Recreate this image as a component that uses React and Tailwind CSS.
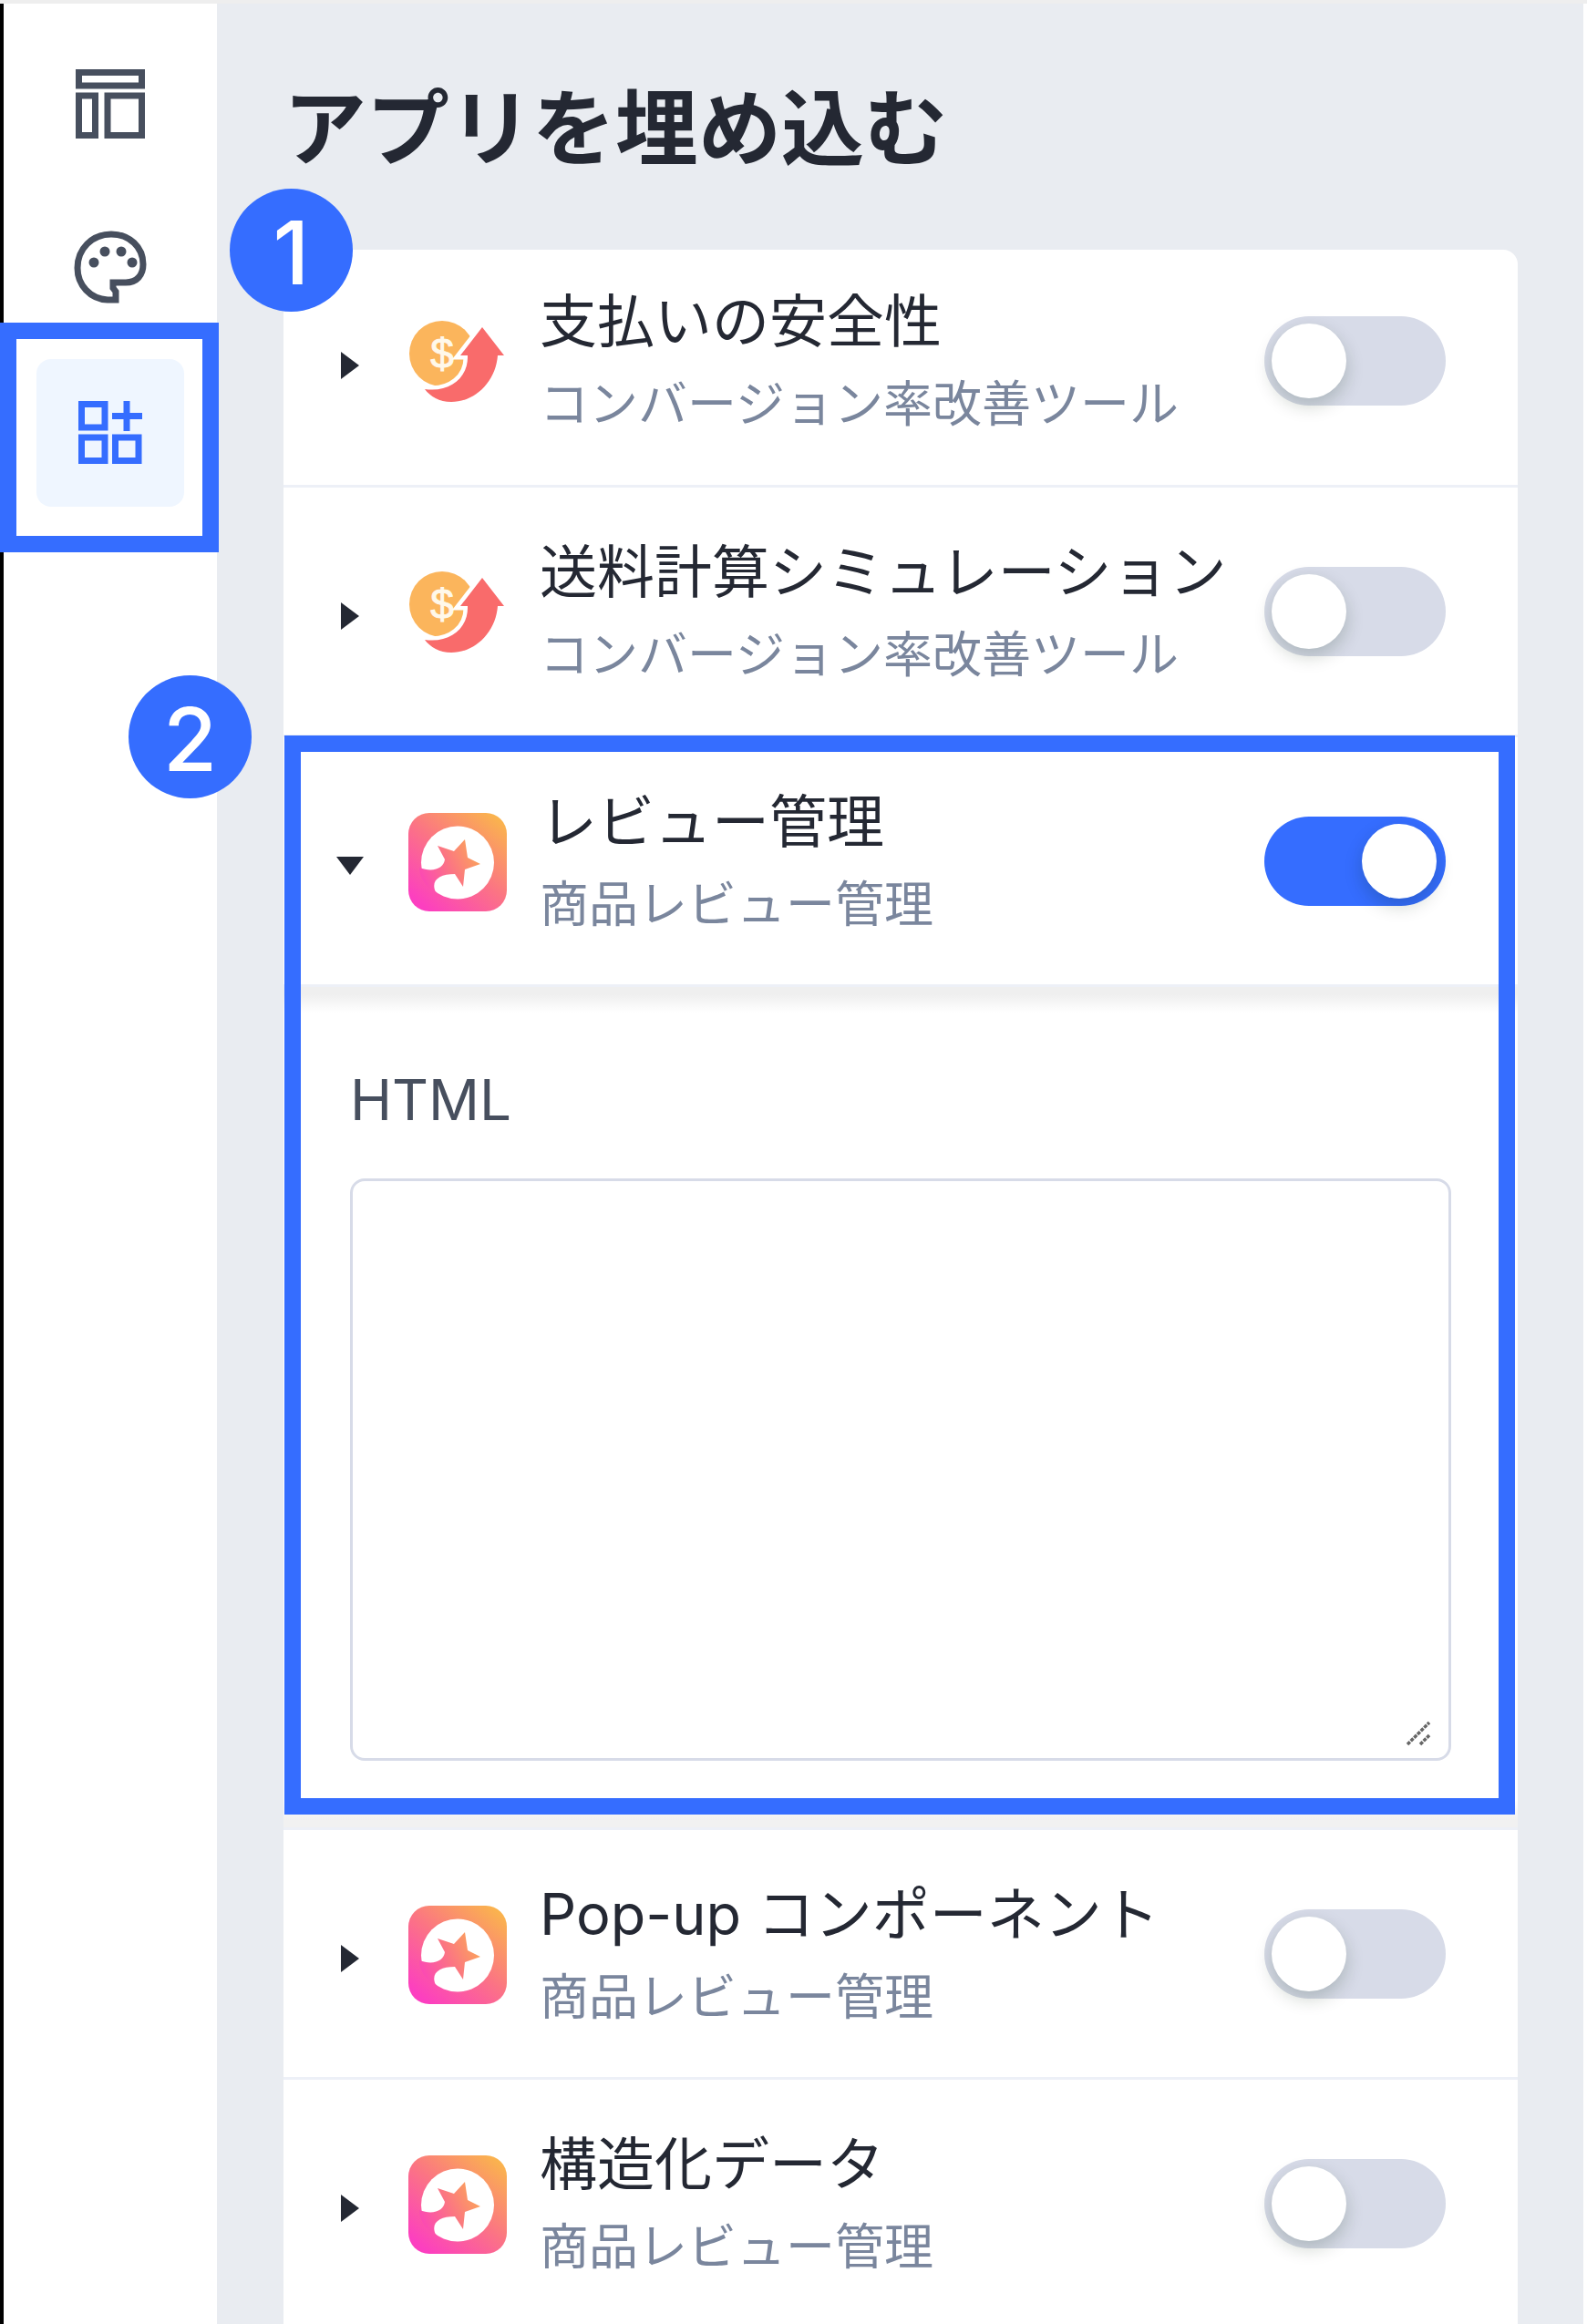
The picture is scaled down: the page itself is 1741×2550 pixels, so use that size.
import React, { useState } from 'react';

const apps = [
    { id: 'payment', name: '支払いの安全性', desc: 'コンバージョン率改善ツール', icon: 'growth' },
    { id: 'shipping', name: '送料計算シミュレーション', desc: 'コンバージョン率改善ツール', icon: 'growth' },
    { id: 'review', name: 'レビュー管理', desc: '商品レビュー管理', icon: 'star', enabled: true, open: true, step: 2 },
    { id: 'popup', name: 'Pop-up コンポーネント', desc: '商品レビュー管理', icon: 'star' },
    { id: 'schema', name: '構造化データ', desc: '商品レビュー管理', icon: 'star' },
];

const LayoutIcon = () => (
    <svg viewBox="0 0 76 76" className="size-[76px]" fill="none" stroke="#474f5e" strokeWidth="7">
        <rect x="3.5" y="3.5" width="69" height="14.5" />
        <rect x="3.5" y="29" width="18" height="43.5" />
        <rect x="35" y="29" width="37.5" height="43.5" />
    </svg>
);

const PaletteIcon = () => (
    <svg viewBox="0 0 80 80" className="size-20" fill="none" stroke="#474f5e" strokeWidth="7">
        <path d="M46 76H37C18 75 4 60 4 41C4 20 20 4 41 4C61 4 76 18 76 37C76 49 69 57 57 57H43V63L46 67Z" />
        <g fill="#474f5e" stroke="none">
            <circle cx="22" cy="35" r="5.5" />
            <circle cx="34" cy="23" r="5.5" />
            <circle cx="52" cy="23" r="5.5" />
            <circle cx="64" cy="35" r="5.5" />
        </g>
    </svg>
);

const AppsIcon = () => (
    <svg viewBox="0 0 70 70" className="size-[70px]" fill="none" stroke="#356dff" strokeWidth="7">
        <rect x="3.5" y="3.5" width="25.5" height="25.5" />
        <rect x="3.5" y="40" width="25.5" height="25.5" />
        <rect x="40.5" y="40" width="25.5" height="25.5" />
        <path d="M53 0V33M37 16.5H70" />
    </svg>
);

const GrowthIcon = () => (
    <svg viewBox="0 0 108 108" className="mt-0.5 size-[108px] shrink-0">
        <circle cx="37" cy="45" r="36" fill="#fbb55c" />
        <text
            x="37"
            y="61"
            textAnchor="middle"
            fontSize="46"
            fill="#fff8ea"
            stroke="#fff8ea"
            className="font-['Liberation_Sans']"
        >
            $
        </text>
        <path
            d="M81 16L105 47H98C96 75 74 98 47 98C34 98 24 92 18 84C46 88 66 71 65 47H57Z"
            fill="#f96b6b"
            stroke="#fff"
            strokeWidth="9"
            paintOrder="stroke"
        />
    </svg>
);

const StarIcon = () => (
    <svg viewBox="0 0 108 108" className="mt-0.5 size-[108px] shrink-0">
        <defs>
            <linearGradient id="starBg" x1="0.15" y1="0.95" x2="0.9" y2="0.05">
                <stop offset="0" stopColor="#fc3fc0" />
                <stop offset="0.5" stopColor="#fb7484" />
                <stop offset="1" stopColor="#fab34e" />
            </linearGradient>
            <linearGradient id="starFg" gradientUnits="userSpaceOnUse" x1="14" y1="72" x2="74" y2="42">
                <stop offset="0" stopColor="#fb49b4" />
                <stop offset="0.5" stopColor="#fb7484" />
                <stop offset="1" stopColor="#fba25c" />
            </linearGradient>
        </defs>
        <rect width="108" height="108" rx="23" fill="url(#starBg)" />
        <circle cx="54" cy="54.5" r="40" fill="#fff" />
        <path d="M12 60C28 66 39 60 40 51L32 36L50 42L62 29L65 49L79 56L62 62L60 81L51 67C34 67 24 74 30 87C20 82 12 72 12 60Z" fill="url(#starFg)" />
    </svg>
);

const Switch = ({ checked, onChange, label }) => (
    <label className="relative block h-[98px] w-[199px] shrink-0 cursor-pointer">
        <input type="checkbox" role="switch" aria-label={label} checked={checked} onChange={onChange} className="peer sr-only" />
        <span className="block h-full rounded-full bg-[#d7dbe8] peer-checked:bg-[#356dff]" />
        <span className="absolute top-2 left-2 size-[82px] rounded-full bg-white shadow-[0_8px_20px_rgba(0,35,11,0.2)] peer-checked:right-2.5 peer-checked:left-auto" />
    </label>
);

const StepBadge = ({ number, className }) => (
    <span className={`absolute z-10 flex size-[135px] items-center justify-center rounded-full bg-[#356dff] pt-1 font-['Inter'] text-8xl font-medium text-white ${className}`}>
        {number}
    </span>
);

const AppItem = ({ app }) => {
    const [enabled, setEnabled] = useState(!!app.enabled);
    const [open, setOpen] = useState(!!app.open);

    return (
        <li className="group relative border-b-3 border-[#edf0f7]">
            <div className="flex h-[271px] items-center pr-[79px] pl-[63px] group-first:h-[258px] group-first:pb-3.5">
                <button onClick={() => setOpen(!open)} aria-label={app.name} aria-expanded={open} className="mt-2.5 mr-[54px] flex size-5 shrink-0 items-center justify-center">
                    <svg viewBox="0 0 32 32" className={`size-8 shrink-0 ${open ? 'rotate-90' : ''}`} fill="#242833">
                        <path d="M6 1L26 16L6 31Z" />
                    </svg>
                </button>
                {app.icon === 'growth' ? <GrowthIcon /> : <StarIcon />}
                <div className="ml-9 flex-1 pt-1.5 whitespace-nowrap">
                    <h2 className="text-[63px] leading-[90px] text-[#242833]">{app.name}</h2>
                    <p className="text-[54px] leading-[94px] text-[#7a869d]">{app.desc}</p>
                </div>
                <Switch checked={enabled} onChange={() => setEnabled(!enabled)} label={app.name} />
            </div>
            {open && (
                <div className="border-t-3 border-[#edf0f7] bg-[linear-gradient(to_bottom,#efefef_8px,#fff_28px,#fff_calc(100%-30px),#f1f1f1_calc(100%-8px))] px-[73px] pt-[84px] pb-[73px]">
                    <label htmlFor={app.id} className="block text-[62px] leading-20 text-[#474f5e]">HTML</label>
                    <div className="relative mt-[46px]">
                        <textarea id={app.id} className="block h-[639px] w-full resize-none rounded-2xl border-3 border-[#d7dbe8] bg-white p-6 text-5xl outline-none" />
                        <svg viewBox="0 0 28 28" className="pointer-events-none absolute right-[22px] bottom-4 size-7" stroke="#666" strokeWidth="3.5" strokeDasharray="4 1.2">
                            <path d="M2 26L26 2M16 26L26 16" />
                        </svg>
                    </div>
                </div>
            )}
            {app.step && (
                <>
                    <div className="pointer-events-none absolute -top-0.5 right-[3px] bottom-3.5 left-px border-18 border-[#356dff]" />
                    <StepBadge number={app.step} className="-top-[68px] -left-[170px]" />
                </>
            )}
        </li>
    );
};

const App = () => (
    <div className="flex h-screen flex-col overflow-hidden border-t-4 border-[#eeeeee] bg-white font-['Inter','Noto_Sans_CJK_JP',sans-serif]">
        <div className="flex min-h-0 flex-1">
            <nav className="flex w-[238px] shrink-0 flex-col items-center border-l-4 border-black bg-white pt-[72px]">
                <button aria-label="Layout"><LayoutIcon /></button>
                <button aria-label="Theme" className="mt-[101px]"><PaletteIcon /></button>
                <div className="relative mt-[61px]">
                    <button aria-label="Apps" className="flex size-[162px] items-center justify-center rounded-2xl bg-[#eff6ff]">
                        <AppsIcon />
                    </button>
                    <div className="pointer-events-none absolute -top-10 -right-[38px] -bottom-[50px] -left-10 border-18 border-[#356dff]" />
                </div>
            </nav>
            <main className="min-w-0 flex-1 border-r-4 border-white bg-[#e9ecf1] pt-[82px] pr-[72px] pl-[73px]">
                <h1 className="text-[91px] leading-[110px] font-bold text-[#242833]">アプリを埋め込む</h1>
                <div className="relative mt-[78px]">
                    <StepBadge number={1} className="-top-[67px] -left-[59px]" />
                    <ul className="rounded-t-2xl bg-white">
                        {apps.map((app) => (
                            <AppItem key={app.id} app={app} />
                        ))}
                    </ul>
                </div>
            </main>
        </div>
    </div>
);

export default App;
